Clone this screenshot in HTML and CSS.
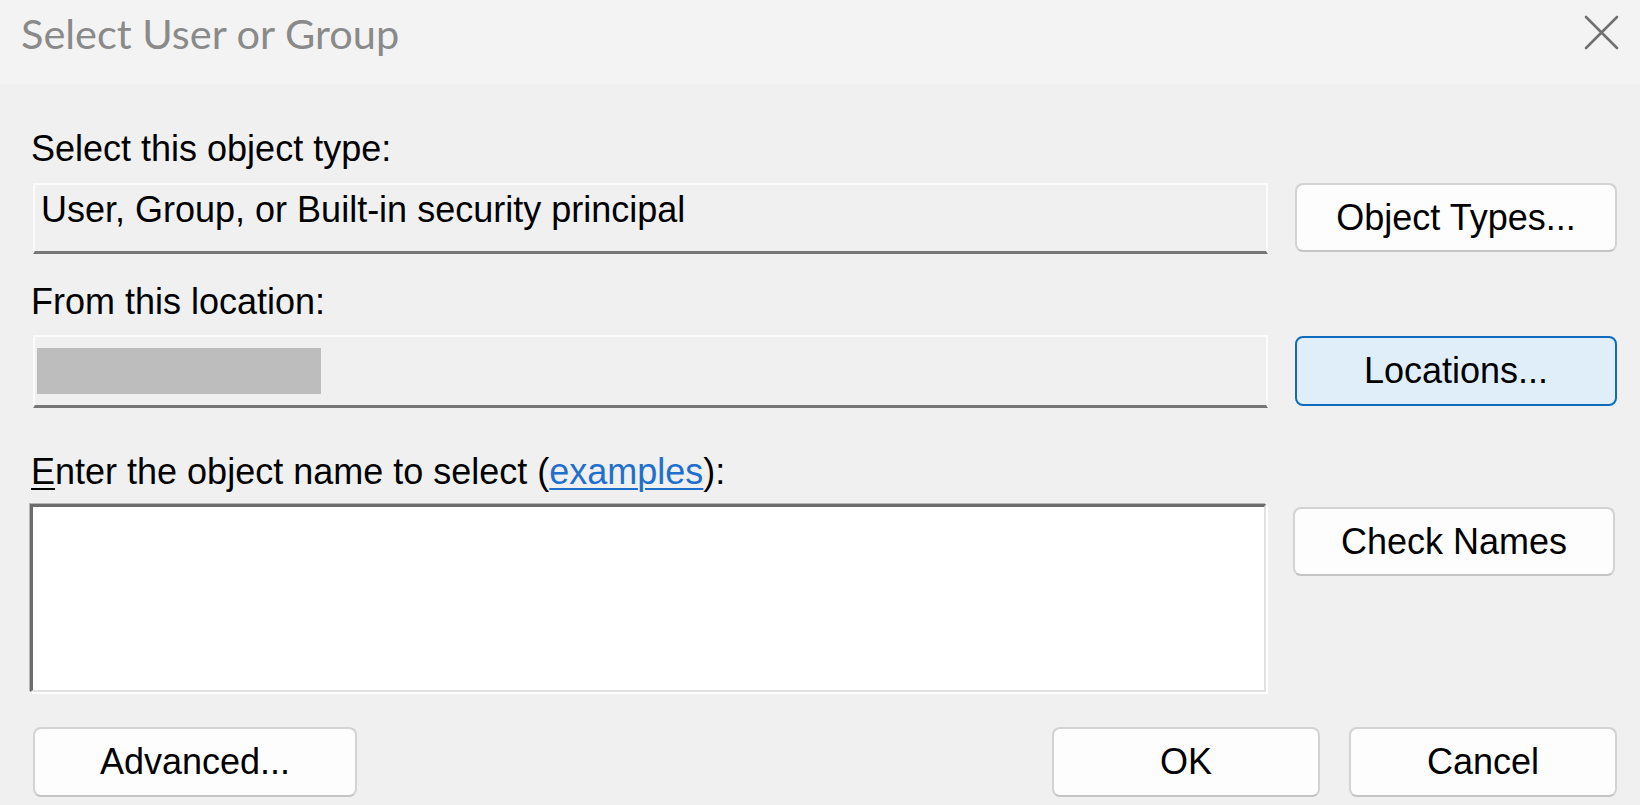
FILE: index.html
```html
<!DOCTYPE html>
<html lang="en">
<head>
<meta charset="utf-8">
<title>Select User or Group</title>
<link rel="stylesheet" href="styles.css">
</head>
<body>
<div class="window">
  <div class="titlebar">
    <span class="title">Select User or Group</span>
    <span class="close" aria-label="Close">
      <svg width="35" height="35" viewBox="0 0 35 35"><path d="M2 2 L33 33 M33 2 L2 33" stroke="#707070" stroke-width="2.6" stroke-linecap="round" fill="none"/></svg>
    </span>
  </div>
  <div class="content">
    <div class="label label-type">Select this object type:</div>
    <div class="row row-type">
      <div class="field field-type">User, Group, or Built-in security principal</div>
      <button class="btn btn-types">Object Types...</button>
    </div>
    <div class="label label-loc">From this location:</div>
    <div class="row row-loc">
      <div class="field field-loc"><span class="redact"></span></div>
      <button class="btn btn-focus">Locations...</button>
    </div>
    <div class="label label-name"><span class="key">E</span>nter the object name to select (<a class="link" href="#">examples</a>):</div>
    <div class="row row-name">
      <div class="textarea"></div>
      <button class="btn btn-check">Check Names</button>
    </div>
    <div class="footer">
      <button class="btn btn-adv">Advanced...</button>
      <div class="spacer"></div>
      <button class="btn btn-ok">OK</button>
      <button class="btn btn-cancel">Cancel</button>
    </div>
  </div>
</div>
</body>
</html>
```
FILE: styles.css
```css
html, body {
  margin: 0;
  padding: 0;
  background: #f0f0f0;
}
.window {
  width: 1640px;
  height: 805px;
  overflow: hidden;
  background: #f0f0f0;
  font-family: "Liberation Sans", Arial, sans-serif;
  font-size: 36px;
  color: #000;
}
.titlebar {
  height: 84px;
  background: #f3f3f3;
  display: flex;
  align-items: flex-start;
  box-sizing: border-box;
  padding-left: 21px;
  padding-right: 21px;
}
.title {
  font-family: Lato, "Open Sans", sans-serif;
  font-size: 41.5px;
  line-height: 43px;
  color: #8a8a8a;
  margin-top: 12px;
}
.close {
  margin-left: auto;
  margin-top: 15px;
  width: 35px;
  height: 35px;
  display: block;
}
.close svg { display: block; }
.content {
  padding: 44px 23px 0 30px;
}
.label {
  line-height: 42px;
  height: 42px;
  white-space: nowrap;
  padding-left: 1px;
}
.label-loc { margin-top: 27px; }
.label-name { margin-top: 43px; }
.key { text-decoration: underline; text-underline-offset: 4px; text-decoration-thickness: 2px; }
.link {
  color: #1f6fcf;
  text-decoration: underline;
  text-underline-offset: 4px;
  text-decoration-thickness: 2px;
}
.row {
  display: flex;
  gap: 27px;
  align-items: flex-start;
}
.row-type { margin-top: 13px; }
.row-loc { margin-top: 12px; }
.row-name { margin-top: 10px; }
.field {
  box-sizing: border-box;
  width: 1235px;
  margin-left: 3px;
  border: 2px solid #fbfbfb;
  border-bottom: 3px solid #767676;
  background: #f0f0f0;
  line-height: 42px;
  padding: 4px 6px 0;
  white-space: nowrap;
}
.field-type { height: 71px; }
.field-loc { height: 73px; padding-top: 11px; padding-left: 2px; }
.redact {
  display: block;
  width: 284px;
  height: 46px;
  background: #bdbdbd;
}
.textarea {
  box-sizing: border-box;
  width: 1236px;
  height: 188px;
  margin-top: 1px;
  background: #fff;
  border-top: 3px solid #6c6c6c;
  border-left: 3px solid #6c6c6c;
  border-right: 2px solid #e1e1e1;
  border-bottom: 2px solid #e1e1e1;
  box-shadow: 2px 2px 0 0 #ffffff, -1px -1px 0 0 #b5b5b5;
}
.btn {
  box-sizing: border-box;
  width: 322px;
  height: 69px;
  background: #fdfdfd;
  border: 2px solid #d3d3d3;
  border-bottom-color: #c4c4c4;
  border-radius: 8px;
  font-family: "Liberation Sans", Arial, sans-serif;
  font-size: 36px;
  line-height: 42px;
  color: #000;
  padding: 0;
  display: flex;
  align-items: center;
  justify-content: center;
  flex: none;
}
.btn-focus {
  margin-top: 1px;
  height: 70px;
  background: #e0eef9;
  border: 2px solid #0f6cbd;
}
.btn-check { margin-top: 4px; }
.footer {
  display: flex;
  align-items: flex-start;
  margin-top: 35px;
}
.btn-adv { width: 324px; height: 70px; margin-left: 3px; }
.spacer { flex: 1; }
.btn-ok { width: 268px; height: 70px; }
.btn-cancel { width: 268px; height: 70px; margin-left: 29px; }
```
